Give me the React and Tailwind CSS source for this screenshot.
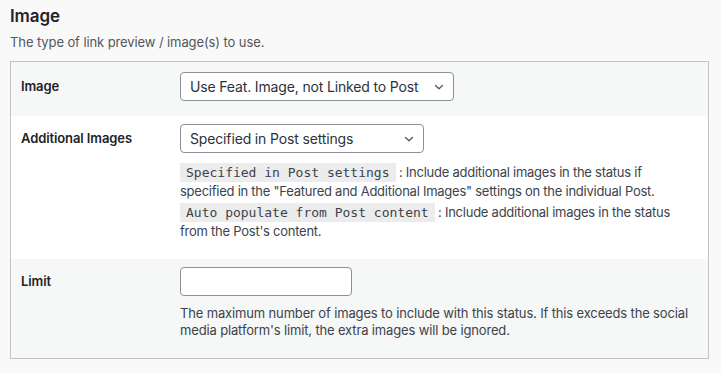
import React from "react";

const Chevron = () => (
  <svg width="12" height="12" viewBox="0 0 12 12" fill="none" className="shrink-0">
    <path d="M2.5 4.5l3.5 3.3 3.5-3.3" stroke="#50575e" strokeWidth="1.3" strokeLinecap="round" strokeLinejoin="round" />
  </svg>
);

const FakeSelect = ({ value, width }) => (
  <div
    className={`flex items-center justify-between h-[29px] pl-[9px] pr-[8px] bg-white border border-[#8c8f94] rounded-[4px] text-[14px] tracking-[-0.15px] text-[#2c3338] ${width}`}
  >
    <span>{value}</span>
    <Chevron />
  </div>
);

const Code = ({ children }) => (
  <code className="bg-[#ececec] px-[6px] py-[2px] font-['DejaVu_Sans_Mono',monospace] text-[13px] tracking-normal text-[#3c434a]">
    {children}
  </code>
);

const Row = ({ label, striped, className, children }) => (
  <div className={`flex ${striped ? "bg-[#f6f7f7]" : "bg-white"} ${className}`}>
    <div className="w-[169px] shrink-0 pl-[10px] text-[13px] font-semibold text-[#1d2327] leading-[29px]">
      {label}
    </div>
    <div className="flex-1 pr-[8px]">{children}</div>
  </div>
);

export default function App() {
  return (
    <div className="min-h-screen bg-[#f9f9f9] px-[10px] pt-[4px] font-['Inter',sans-serif] text-[#3c434a] tracking-[-0.1px]">
      {/* Section header */}
      <h2 className="text-[17px] font-semibold text-[#1d2327] leading-[24px]">Image</h2>
      <p className="mt-[5px] text-[13px] leading-[18px] text-[#50575e]">
        The type of link preview / image(s) to use.
      </p>

      {/* Settings table */}
      <div className="mt-[10px] w-[699px] border border-[#c3c4c7]">
        <Row label="Image" striped className="pt-[10px] pb-[15px]">
          <FakeSelect value="Use Feat. Image, not Linked to Post" width="w-[274px]" />
        </Row>

        <Row label="Additional Images" className="pt-[8px] pb-[19px]">
          <FakeSelect value="Specified in Post settings" width="w-[244px]" />
          <div className="mt-[10px] text-[13px] leading-[18px] text-[#3c434a] tracking-[-0.25px]">
            <p>
              <Code>Specified in Post settings</Code> : Include additional images in the status if
              <br />
              specified in the "Featured and Additional Images" settings on the individual Post.
            </p>
            <p className="mt-[3px]">
              <Code>Auto populate from Post content</Code> : Include additional images in the status
              <br />
              from the Post's content.
            </p>
          </div>
        </Row>

        <Row label="Limit" striped className="pt-[8px] pb-[19px]">
          <input
            type="text"
            className="block w-[172px] h-[29px] bg-white border border-[#8c8f94] rounded-[4px] px-2 outline-none"
          />
          <p className="mt-[9px] text-[13px] leading-[17px] text-[#3c434a] tracking-[-0.15px]">
            The maximum number of images to include with this status. If this exceeds the social
            <br />
            media platform's limit, the extra images will be ignored.
          </p>
        </Row>
      </div>
    </div>
  );
}
